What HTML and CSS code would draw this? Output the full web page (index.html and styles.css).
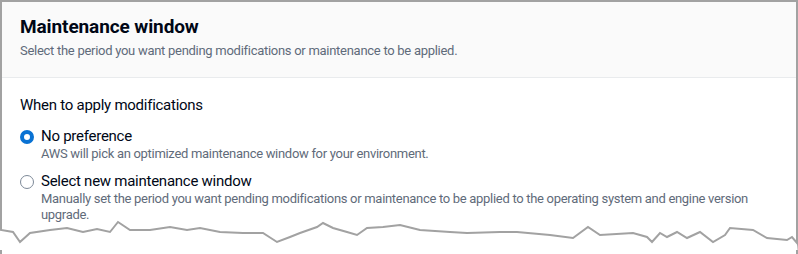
FILE: index.html
```html
<!DOCTYPE html>
<html lang="en">
<head>
    <meta charset="UTF-8">
    <title>Maintenance window</title>
    <link rel="stylesheet" href="styles.css">
</head>
<body>
    <div class="frame">
        <div class="panel-header">
            <h2>Maintenance window</h2>
            <p>Select the period you want pending modifications or maintenance to be applied.</p>
        </div>

        <div class="panel-body">
            <div class="field-label">When to apply modifications</div>

            <div class="radio-group">
                <label class="radio">
                    <span class="dot checked"></span>
                    <span class="radio-text">
                        <span class="radio-label">No preference</span>
                        <span class="radio-desc">AWS will pick an optimized maintenance window for your environment.</span>
                    </span>
                </label>
                <label class="radio">
                    <span class="dot"></span>
                    <span class="radio-text">
                        <span class="radio-label">Select new maintenance window</span>
                        <span class="radio-desc">Manually set the period you want pending modifications or maintenance to be applied to the operating system and engine version upgrade.</span>
                    </span>
                </label>
            </div>
        </div>

        <!-- torn bottom edge of the screenshot -->
        <svg class="torn" width="798" height="40" viewBox="0 210 798 40">
            <path d="M0 230 L13 232 L20 242 L30 233 L50 230 L67 228 L83 232 L97 229 L110 232 L118 222 L130 230 L150 230 L170 227 L187 230 L200 228 L220 232 L243 233 L263 233 L277 242 L290 237 L300 233 L317 227 L323 223 L333 228 L347 232 L357 235 L367 228 L383 227 L400 225 L420 230 L450 232 L467 233 L500 232 L517 232 L550 235 L573 238 L588 227 L600 235 L633 233 L647 237 L652 242 L660 233 L667 237 L677 232 L687 238 L700 232 L713 242 L725 235 L730 228 L753 230 L767 238 L787 240 L792 237 L797 243 L798 254 L0 254 Z" fill="#fff"/>
            <path d="M1 210 L1 230 L13 232 L20 242 L30 233 L50 230 L67 228 L83 232 L97 229 L110 232 L118 222 L130 230 L150 230 L170 227 L187 230 L200 228 L220 232 L243 233 L263 233 L277 242 L290 237 L300 233 L317 227 L323 223 L333 228 L347 232 L357 235 L367 228 L383 227 L400 225 L420 230 L450 232 L467 233 L500 232 L517 232 L550 235 L573 238 L588 227 L600 235 L633 233 L647 237 L652 242 L660 233 L667 237 L677 232 L687 238 L700 232 L713 242 L725 235 L730 228 L753 230 L767 238 L787 240 L792 237 L797 243 L797 210" fill="none" stroke="#a2a2a2" stroke-width="2"/>
        </svg>
    </div>
</body>
</html>
```

FILE: styles.css
```css
* {
    margin: 0;
    padding: 0;
    box-sizing: border-box;
}

body {
    font-family: Roboto, 'Open Sans', sans-serif;
    color: #000716;
    background: #fff;
    width: 798px;
    height: 254px;
    overflow: hidden;
}

.frame {
    position: relative;
    height: 254px;
    border-top: 2px solid #a2a2a2;
    border-left: 2px solid #a2a2a2;
    border-right: 2px solid #a2a2a2;
}

.panel-header {
    background: #fafafa;
    border-bottom: 1px solid #e9ebed;
    padding: 13px 18px 0;
    height: 76px;
}

.panel-header h2 {
    font-size: 19px;
    font-weight: 700;
    line-height: 24px;
    letter-spacing: -0.1px;
}

.panel-header p {
    font-size: 13px;
    color: #5f6b7a;
    line-height: 18px;
    margin-top: 3px;
    letter-spacing: -0.28px;
}

.panel-body {
    padding: 17px 18px 0;
}

.field-label {
    font-size: 15px;
    line-height: 20px;
    letter-spacing: -0.26px;
}

.radio-group {
    margin-top: 12px;
    display: flex;
    flex-direction: column;
    gap: 10px;
}

.radio {
    display: flex;
    gap: 7px;
}

.dot {
    flex: none;
    width: 14px;
    height: 14px;
    margin-top: 3px;
    border-radius: 50%;
    border: 1.5px solid #7d8998;
    background: #fff;
}

.dot.checked {
    border: 4px solid #0972d3;
}

.radio-text {
    display: flex;
    flex-direction: column;
}

.radio-label {
    font-size: 15px;
    line-height: 19px;
    letter-spacing: -0.26px;
}

.radio-desc {
    font-size: 13px;
    line-height: 16px;
    color: #5f6b7a;
    letter-spacing: -0.3px;
}

.torn {
    position: absolute;
    left: -2px;
    top: 208px;
}
```
